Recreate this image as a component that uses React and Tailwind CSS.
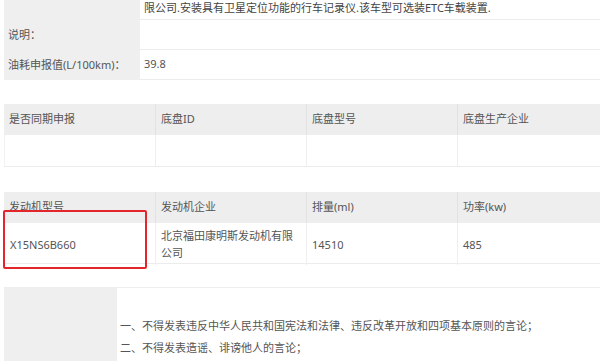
const font = { fontFamily: '"Noto Sans", "Noto Sans CJK SC", sans-serif' };

const InfoRow = ({ label, value, h, top }) => (
  <div className={`grid grid-cols-[136px_1fr] ${h}`}>
    <div className="bg-[#efefef] pl-[4px] flex items-center">{label}</div>
    <div className={`border-b border-[#ececec] pl-[4px] flex ${top ? "items-start" : "items-center"}`}>
      {value}
    </div>
  </div>
);

const Table = ({ head, row, rowClass, children }) => (
  <div className="relative w-[604px]">
    <div className="grid grid-cols-4 h-[31px] bg-[#eeeeee]">
      {head.map((h, i) => (
        <div key={i} className={`flex items-center px-[5px] ${i > 0 ? "border-l border-[#e2e2e2]" : ""}`}>
          {h}
        </div>
      ))}
    </div>
    <div className={`grid grid-cols-4 border-b border-[#ececec] ${rowClass}`}>
      {row.map((c, i) => (
        <div key={i} className={`flex items-center px-[5px] py-[4px] leading-[17px] border-l border-[#eeeeee] ${i === 0 ? "border-l-[#f2f2f2]" : ""}`}>
          {c}
        </div>
      ))}
    </div>
    {children}
  </div>
);

export default function App() {
  return (
    <div className="w-[600px] h-[361px] overflow-hidden bg-white pl-[4px] text-[11px] text-[#555]" style={font}>
      {/* 基本信息 */}
      <div className="w-[596px]">
        <InfoRow
          h="h-[20px]"
          top
          label=""
          value={<span className="leading-[16px] text-[#444]">限公司.安装具有卫星定位功能的行车记录仪.该车型可选装ETC车载装置.</span>}
        />
        <InfoRow h="h-[30px]" label="说明：" value="" />
        <InfoRow h="h-[30px]" label="油耗申报值(L/100km)：" value="39.8" />
      </div>

      <div className="mt-[24px]">
        <Table head={["是否同期申报", "底盘ID", "底盘型号", "底盘生产企业"]} row={["", "", "", ""]} rowClass="h-[32px]" />
      </div>

      <div className="mt-[25px]">
        <Table
          head={["发动机型号", "发动机企业", "排量(ml)", "功率(kw)"]}
          row={["X15NS6B660", "北京福田康明斯发动机有限公司", "14510", "485"]}
          rowClass="h-[41px]"
        >
          <div className="absolute left-[-1px] top-[18px] w-[144px] h-[59px] border-2 border-[#e3262b] rounded-[2px]" />
        </Table>
      </div>

      {/* 评论须知 */}
      <div className="mt-[23px] border-t border-[#eeeeee] grid grid-cols-[113px_1fr] h-[80px]">
        <div className="bg-[#efefef]" />
        <div className="pl-[3px] pt-[27px] leading-[22px]">
          <div>一、不得发表违反中华人民共和国宪法和法律、违反改革开放和四项基本原则的言论；</div>
          <div>二、不得发表造谣、诽谤他人的言论；</div>
        </div>
      </div>
    </div>
  );
}
